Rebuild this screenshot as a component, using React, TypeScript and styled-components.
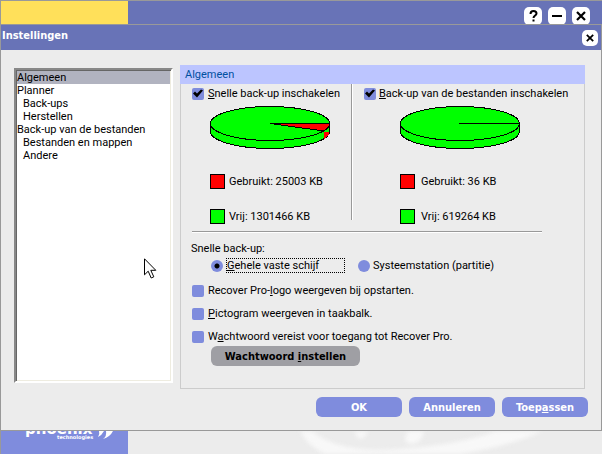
import React, { useState } from "react";
import styled, { createGlobalStyle } from "styled-components";

const GlobalStyle = createGlobalStyle`
  * { box-sizing: border-box; }
  body {
    margin: 0;
    background: #ececec;
    color: #000;
    font-family: Roboto, "Liberation Sans", sans-serif;
    font-size: 11px;
    line-height: 13px;
  }
  button, input, select { font: inherit; margin: 0; }
`;

const boldFont = `"DejaVu Sans Condensed", "DejaVu Sans", sans-serif`;

const Frame = styled.div`
  display: flex;
  flex-direction: column;
  min-height: 100vh;
`;

const AppBar = styled.header`
  display: flex;
  height: 24px;
  overflow: hidden;
  background: #6873b7;
  border: 1px solid #999;
  border-width: 1px 0 0 1px;
`;

const BrandBlock = styled.div`
  width: 127px;
  background: #ffe05a;
`;

const WindowButtons = styled.div`
  display: flex;
  gap: 6px;
  margin: 6px 12px 0 auto;
`;

const WindowButton = styled.button<{ $size: number }>`
  flex: none;
  display: grid;
  place-items: center;
  width: ${(p) => p.$size}px;
  height: ${(p) => p.$size}px;
  padding: 0;
  border: 0;
  border-radius: 5px;
  background: #fff;
`;

const Dialog = styled.section`
  flex: 1;
  display: flex;
  flex-direction: column;
  border: 1px solid #999;
  background: #ececec;
`;

const TitleBar = styled.div`
  display: flex;
  align-items: center;
  justify-content: space-between;
  height: 25px;
  padding: 0 3px 0 1px;
  background: #6873b7;
`;

const Title = styled.h1`
  margin: 0 0 4px;
  color: #fff;
  font-family: ${boldFont};
  font-size: 11px;
  font-weight: bold;
`;

const Body = styled.div`
  flex: 1;
  display: flex;
  gap: 7px;
  padding: 15px 16px 0 13px;
`;

const ListArea = styled.div`
  position: relative;
  flex: none;
  display: flex;
  width: 159px;
  margin: 3px 0 6px;
`;

const SectionList = styled.select`
  width: 100%;
  padding: 1px 1px 0;
  overflow: hidden;
  appearance: none;
  outline: none;
  color: #000;
  background: #fff;
  border: 2px solid;
  border-color: #888 #fff #fff #888;
  border-radius: 0;
  box-shadow: inset 1px 1px #666, inset -1px -1px #eeece0;
`;

const Section = styled.option<{ $nested?: boolean }>`
  height: 13px;
  min-height: 13px;
  padding: 0 0 0 ${(p) => (p.$nested ? 6 : 0)}px;
  line-height: 13px;
  color: #000;
  &:checked {
    color: #000;
    background: #b1b3c0 linear-gradient(#b1b3c0, #b1b3c0);
  }
`;

const Cursor = styled.svg`
  position: absolute;
  left: 130px;
  top: 190px;
  pointer-events: none;
`;

const Panel = styled.div`
  flex: 1;
  min-width: 0;
  border: 1px solid #ccc;
  border-top: 0;
`;

const PanelTitle = styled.h2`
  margin: 0 -1px;
  padding: 3px 5px;
  background: #bcc5ff;
  color: #0050a0;
  font-size: 11px;
  font-weight: normal;
`;

const Usage = styled.div`
  display: grid;
  grid-template-columns: 170px 2px 1fr;
`;

const UsageColumn = styled.div`
  padding: 3px 0 0 11px;
`;

const Divider = styled.div`
  margin-bottom: 4px;
  border-left: 1px solid #999;
  border-right: 1px solid #fff;
`;

const Rule = styled.hr`
  height: 2px;
  margin: 7px 42px 9px 11px;
  border: 0;
  border-top: 1px solid #999;
  border-bottom: 1px solid #fff;
`;

const Choice = styled.label<{ $tight?: boolean }>`
  display: flex;
  align-items: center;
  gap: ${(p) => (p.$tight ? 3 : 4)}px;
  white-space: nowrap;
`;

const CheckBox = styled.input.attrs({ type: "checkbox" })`
  flex: none;
  appearance: none;
  width: 12px;
  height: 12px;
  border-radius: 2px;
  background: #7f8cdd;
  &:checked::before {
    content: "";
    display: block;
    width: 12px;
    height: 12px;
    background: #000;
    clip-path: polygon(1px 6px, 3px 4px, 5px 6px, 9px 2px, 11px 3px, 5px 10px);
  }
`;

const Radio = styled.input.attrs({ type: "radio" })`
  flex: none;
  appearance: none;
  width: 12px;
  height: 12px;
  border-radius: 50%;
  background: #7f8cdd;
  &:checked {
    background: radial-gradient(circle, #000 2px, #7f8cdd 3px);
  }
`;

const Chart = styled.div<{ $indent: number }>`
  padding-left: ${(p) => p.$indent}px;
`;

const Pie = styled.svg`
  display: block;
  margin: 6px 0 25px;
`;

const Legend = styled.div<{ $gap: number }>`
  display: flex;
  align-items: center;
  gap: ${(p) => p.$gap}px;
  height: 15px;
  & + & { margin-top: 20px; }
`;

const Swatch = styled.span<{ $color: string }>`
  width: 15px;
  height: 15px;
  border: 1px solid #000;
  background: ${(p) => p.$color};
`;

const Scope = styled.fieldset`
  margin: 0 0 10px;
  padding: 0 0 0 10px;
  border: 0;
`;

const ScopeTitle = styled.legend`
  padding: 0;
`;

const ScopeChoices = styled.div`
  display: flex;
  gap: 13px;
  height: 17px;
  margin-top: 2px;
  padding-left: 20px;
`;

const RadioText = styled.span<{ $focused?: boolean }>`
  width: ${(p) => (p.$focused ? "119px" : "auto")};
  border: 1px dotted ${(p) => (p.$focused ? "#000" : "transparent")};
`;

const Options = styled.div`
  display: grid;
  justify-items: start;
  gap: 10px;
  padding-left: 11px;
`;

const Pill = styled.button<{ $muted?: boolean }>`
  width: ${(p) => (p.$muted ? 149 : 86)}px;
  height: 20px;
  padding: 0;
  border: 0;
  border-radius: 6px;
  background: ${(p) => (p.$muted ? "#9f9fa4" : "#7f8cdd")};
  color: ${(p) => (p.$muted ? "#000" : "#fff")};
  font-family: ${boldFont};
  font-weight: bold;
`;

const PasswordRow = styled.div`
  padding: 3px 0 0 30px;
`;

const Actions = styled.div`
  display: flex;
  justify-content: flex-end;
  gap: 7px;
  padding: 8px 13px 13px;
`;

const AppFooter = styled.footer`
  display: flex;
  height: 23px;
  overflow: hidden;
  border-left: 1px solid #999;
`;

const Logo = styled.div`
  position: relative;
  flex: none;
  width: 127px;
  background: #7f8cdd;
  color: #fff;
  font-family: "DejaVu Sans", sans-serif;
  font-weight: bold;
`;

const LogoName = styled.div`
  position: absolute;
  left: 24px;
  bottom: 17px;
  font-size: 15px;
  line-height: 16px;
`;

const LogoSub = styled.div`
  padding: 3px 0 0 56px;
  font-size: 5px;
  line-height: 6px;
`;

const LogoWing = styled.svg`
  position: absolute;
  left: 94px;
  top: 0;
`;

const Watermark = styled.svg`
  flex: 1;
  height: 23px;
  filter: blur(2px);
`;

function Cross({ size }: { size: number }) {
  return (
    <svg width={size} height={size} viewBox="0 0 10 10" stroke="#000" strokeWidth="2.2">
      <path d="M1 1 9 9M9 1 1 9" />
    </svg>
  );
}

function UsagePie({ slice }: { slice?: boolean }) {
  return (
    <Pie width="120" height="43" viewBox="0 0 120 43" stroke="#000" shapeRendering="crispEdges">
      <path d="M.5 17.5v8a59.500 17 0 0 0 119 0v-8" fill="#0f0" />
      <ellipse cx="60" cy="17.5" rx="59.5" ry="17" fill="#0f0" />
      {slice && <path d="M114 26v7l5-5v-2z" fill="#f00" stroke="none" />}
      {slice ? (
        <path d="M60 17.5h59.5q0 4-5.500 7.500z" fill="#f00" />
      ) : (
        <path d="M59 17.500h60" />
      )}
    </Pie>
  );
}

function UsageLegend({ used, free, gap }: { used: string; free: string; gap: number }) {
  return (
    <>
      <Legend $gap={gap}>
        <Swatch $color="#f00" />
        Gebruikt: {used} KB
      </Legend>
      <Legend $gap={gap}>
        <Swatch $color="#0f0" />
        Vrij: {free} KB
      </Legend>
    </>
  );
}

const sections = [
  { name: "Algemeen" },
  { name: "Planner" },
  { name: "Back-ups", nested: true },
  { name: "Herstellen", nested: true },
  { name: "Back-up van de bestanden" },
  { name: "Bestanden en mappen", nested: true },
  { name: "Andere", nested: true },
];

export default function App() {
  const [scope, setScope] = useState("disk");
  return (
    <Frame>
      <GlobalStyle />
      <AppBar>
        <BrandBlock />
        <WindowButtons>
          <WindowButton $size={18} aria-label="Help">
            <svg width="9" height="12" viewBox="0 0 9 12" fill="none" stroke="#000" strokeWidth="2">
              <path d="M1.500 4Q1.500 1 4.500 1T7.500 3.500C7.500 5.500 4.500 5.500 4.500 8M4.500 9.500v2" />
            </svg>
          </WindowButton>
          <WindowButton $size={18} aria-label="Minimaliseren">
            <svg width="10" height="2"><path d="M0 0h10v2H0z" /></svg>
          </WindowButton>
          <WindowButton $size={18} aria-label="Sluiten"><Cross size={10} /></WindowButton>
        </WindowButtons>
      </AppBar>

      <Dialog role="dialog" aria-labelledby="dialog-title">
        <TitleBar>
          <Title id="dialog-title">Instellingen</Title>
          <WindowButton $size={16} aria-label="Venster sluiten"><Cross size={8} /></WindowButton>
        </TitleBar>
        <Body>
          <ListArea>
            <SectionList size={7} defaultValue="Algemeen" aria-label="Onderdelen">
              {sections.map((s) => (
                <Section key={s.name} value={s.name} $nested={s.nested}>{s.name}</Section>
              ))}
            </SectionList>
            <Cursor width="13" height="22" viewBox="0 0 13 22">
              <path d="M.5.800v16l3.700-3.600 3 6.800 2.600-1.200-3-6.500h5z" fill="#fff" stroke="#000" />
            </Cursor>
          </ListArea>
          <Panel>
            <PanelTitle>Algemeen</PanelTitle>
            <Usage>
              <UsageColumn>
                <Choice>
                  <CheckBox defaultChecked />
                  <span><u>S</u>nelle back-up inschakelen</span>
                </Choice>
                <Chart $indent={18}>
                  <UsagePie slice />
                  <UsageLegend used="25003" free="1301466" gap={4} />
                </Chart>
              </UsageColumn>
              <Divider />
              <UsageColumn>
                <Choice $tight>
                  <CheckBox defaultChecked />
                  <span><u>B</u>ack-up van de bestanden inschakelen</span>
                </Choice>
                <Chart $indent={36}>
                  <UsagePie />
                  <UsageLegend used="36" free="619264" gap={6} />
                </Chart>
              </UsageColumn>
            </Usage>
            <Rule />
            <Scope>
              <ScopeTitle>Snelle back-up:</ScopeTitle>
              <ScopeChoices>
                <Choice $tight>
                  <Radio name="scope" checked={scope === "disk"} onChange={() => setScope("disk")} />
                  <RadioText $focused><u>G</u>ehele vaste schijf</RadioText>
                </Choice>
                <Choice $tight>
                  <Radio name="scope" checked={scope === "partition"} onChange={() => setScope("partition")} />
                  <span>Systeemstation (partitie)</span>
                </Choice>
              </ScopeChoices>
            </Scope>
            <Options>
              <Choice>
                <CheckBox />
                <span>Recover Pro-<u>l</u>ogo weergeven bij opstarten.</span>
              </Choice>
              <Choice>
                <CheckBox />
                <span><u>P</u>ictogram weergeven in taakbalk.</span>
              </Choice>
              <Choice>
                <CheckBox />
                <span>W<u>a</u>chtwoord vereist voor toegang tot Recover Pro.</span>
              </Choice>
            </Options>
            <PasswordRow>
              <Pill $muted>Wachtwoord <u>i</u>nstellen</Pill>
            </PasswordRow>
          </Panel>
        </Body>
        <Actions>
          <Pill>OK</Pill>
          <Pill>Annuleren</Pill>
          <Pill>Toep<u>a</u>ssen</Pill>
        </Actions>
      </Dialog>

      <AppFooter>
        <Logo>
          <LogoName>phoenix</LogoName>
          <LogoSub>technologies</LogoSub>
          <LogoWing width="20" height="9" viewBox="0 0 20 9" fill="#fff">
            <path d="M4 0h5Q7 4 3 6 5 3 4 0zM11 0h7Q15 6 8 8 12 5 11 0z" />
          </LogoWing>
        </Logo>
        <Watermark viewBox="0 0 473 23" preserveAspectRatio="none" fill="#f8f8f8" aria-hidden="true">
          <path d="M172 0h12q20 18 66 19 70-2 118-19h46Q375 18 310 26H205Q180 18 172 0z" />
          <path d="M226 0h14l-4 6q-8 5-10-6zM280 0h16q-4 14-14 13-10-3-2-13z" />
        </Watermark>
      </AppFooter>
    </Frame>
  );
}
